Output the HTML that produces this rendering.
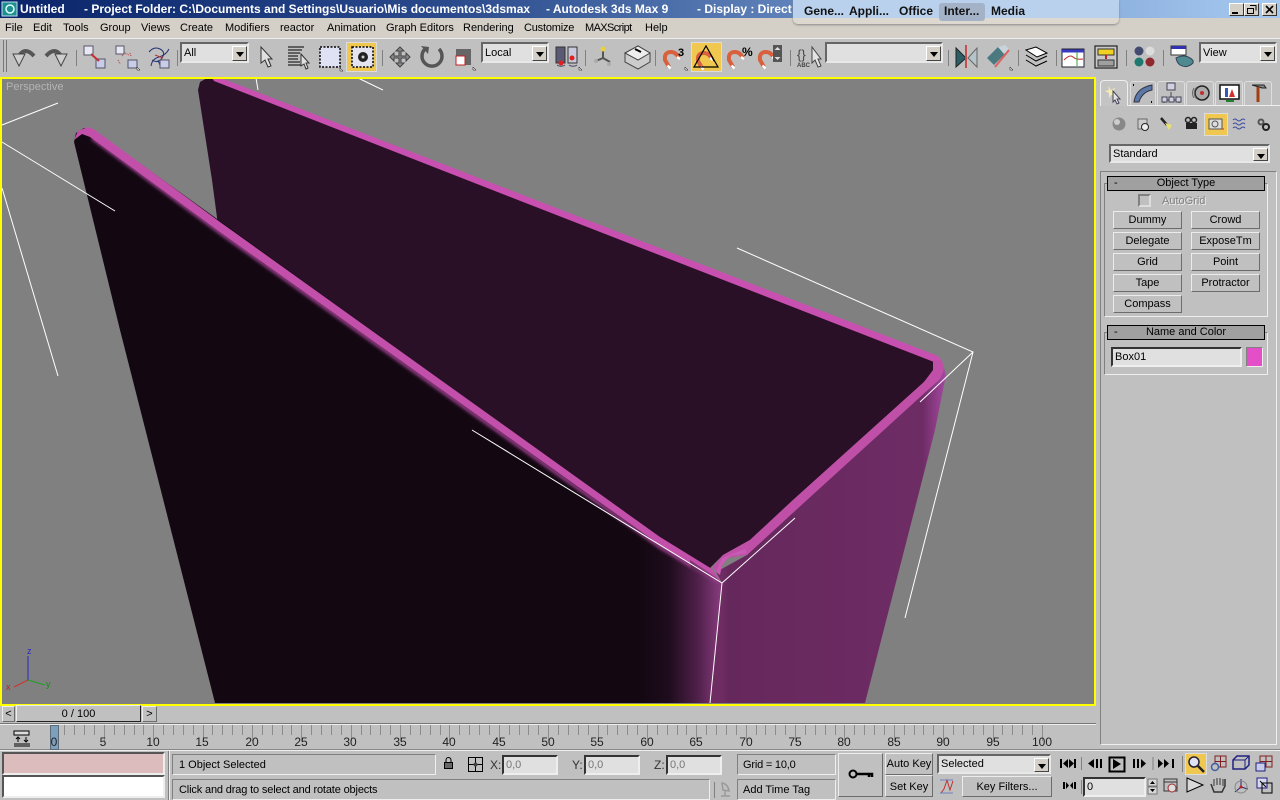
<!DOCTYPE html>
<html><head><meta charset="utf-8"><title>Untitled - Autodesk 3ds Max 9</title>
<style>
html,body{margin:0;padding:0;background:#c0c0c0;width:1280px;height:800px;overflow:hidden}
*{box-sizing:border-box}
body{font:11px "Liberation Sans",sans-serif;color:#000;position:relative}
.a{position:absolute;white-space:pre}
.t{position:absolute;white-space:pre;line-height:14px}
.b{position:absolute;background:#c0c0c0;border:1px solid;border-color:#ececec #6c6c6c #6c6c6c #ececec;text-align:center;white-space:pre}
.d{position:absolute;background:#e0e0e0;border:2px solid;border-color:#666 #e8e8e8 #e8e8e8 #666;padding-left:2px;white-space:pre}
.d i{position:absolute;right:0;top:2px;bottom:0;width:15px;background:#d4d0c8;border:1px solid;border-color:#fff #444 #444 #fff}
.d i:after{content:"";position:absolute;left:3px;top:5px;border:4px solid transparent;border-top:5px solid #000;border-bottom:0}
.s{position:absolute;background:#c0c0c0;border:1px solid;border-color:#808080 #eee #eee #808080;padding-left:6px;white-space:pre}
.h{position:absolute;background:#a0a0a0;border:1px solid #000;text-align:center;white-space:pre}
.g{position:absolute;border:1px solid;border-color:#808080 #eee #eee #808080}
.tk{position:absolute;top:735px;width:24px;text-align:center;font-size:12px;color:#222;line-height:14px}
.sep{position:absolute;width:2px;border-left:1px solid #808080;border-right:1px solid #eee}
.ti{font-weight:bold;font-size:12px;color:#fff;top:2px}
.tb{font-weight:bold;font-size:12px;color:#111;top:4px}
.m{top:21px}
.tab{position:absolute;top:81px;height:24px;border:1px solid #dedede;border-bottom:0;border-radius:3px 3px 0 0}
</style></head><body>
<!-- title bar -->
<div class="a" style="left:0;top:0;width:1280px;height:18px;background:linear-gradient(90deg,#0a246a 0,#2a4a8c 35%,#6f93c8 70%,#a6caf0 100%)"></div>
<div class="t ti" style="left:20px">Untitled</div>
<div class="t ti" style="left:84px">- Project Folder: C:\Documents and Settings\Usuario\Mis documentos\3dsmax</div>
<div class="t ti" style="left:546px">- Autodesk 3ds Max 9</div>
<div class="t ti" style="left:697px">- Display : Direct 3D</div>
<!-- menu -->
<div class="a" style="left:0;top:18px;width:1280px;height:20px;background:#d4d0c8"></div>
<div class="t m" style="left:5px">File</div>
<div class="t m" style="left:33px">Edit</div>
<div class="t m" style="left:63px">Tools</div>
<div class="t m" style="left:100px">Group</div>
<div class="t m" style="left:141px">Views</div>
<div class="t m" style="left:180px">Create</div>
<div class="t m" style="left:225px">Modifiers</div>
<div class="t m" style="left:280px">reactor</div>
<div class="t m" style="left:327px">Animation</div>
<div class="t m" style="left:386px">Graph Editors</div>
<div class="t m" style="left:463px">Rendering</div>
<div class="t m" style="left:524px;letter-spacing:-.2px">Customize</div>
<div class="t m" style="left:585px;letter-spacing:-.6px">MAXScript</div>
<div class="t m" style="left:645px">Help</div>
<!-- taskbar overlay -->
<div class="a" style="left:793px;top:0;width:326px;height:24px;background:linear-gradient(#b9d1ec 0,#b9d1ec 18px,#ddd9d0 18px,#dcd8d0 100%);border-radius:0 0 5px 5px;box-shadow:0 1px 2px #888"></div>
<div class="a" style="left:939px;top:3px;width:46px;height:18px;background:#a3b2c6;border-radius:3px"></div>
<div class="t tb" style="left:804px">Gene...</div>
<div class="t tb" style="left:849px">Appli...</div>
<div class="t tb" style="left:899px">Office</div>
<div class="t tb" style="left:944px">Inter...</div>
<div class="t tb" style="left:991px">Media</div>
<!-- window buttons -->
<div class="b" style="left:1229px;top:3px;width:15px;height:13px;background:#d4d0c8;border-color:#fff #333 #333 #fff"></div>
<div class="b" style="left:1244px;top:3px;width:15px;height:13px;background:#d4d0c8;border-color:#fff #333 #333 #fff"></div>
<div class="b" style="left:1262px;top:3px;width:15px;height:13px;background:#d4d0c8;border-color:#fff #333 #333 #fff"></div>
<!-- toolbar -->
<div class="a" style="left:0;top:38px;width:1280px;height:39px;background:#c0c0c0;border-top:1px solid #eee"></div>
<div class="a" style="left:346px;top:42px;width:31px;height:30px;background:#f0c850;border:1px solid #ddd"></div>
<div class="a" style="left:691px;top:42px;width:31px;height:30px;background:#f0c850;border:1px solid #ddd"></div>
<div class="d" style="left:180px;top:42px;width:69px;height:21px;line-height:19px">All<i></i></div>
<div class="d" style="left:481px;top:42px;width:68px;height:21px;line-height:19px">Local<i></i></div>
<div class="d" style="left:825px;top:42px;width:118px;height:21px"><i></i></div>
<div class="d" style="left:1199px;top:42px;width:78px;height:21px;line-height:19px">View<i></i></div>
<!-- viewport -->
<svg class="a" style="left:0;top:77px" width="1096" height="629" viewBox="0 77 1096 629">
<defs>
<linearGradient id="fw" gradientUnits="userSpaceOnUse" x1="640" y1="0" x2="722" y2="0"><stop offset="0" stop-color="#130812"/><stop offset=".35" stop-color="#1e0c1c"/><stop offset=".7" stop-color="#4f2049"/><stop offset="1" stop-color="#8a3c80"/></linearGradient>
<linearGradient id="rw" gradientUnits="userSpaceOnUse" x1="722" y1="0" x2="945" y2="0"><stop offset="0" stop-color="#6e2c63"/><stop offset=".03" stop-color="#65285c"/><stop offset=".9" stop-color="#6e2c65"/><stop offset="1" stop-color="#a348a0"/></linearGradient>
<filter id="bl" x="-5%" y="-5%" width="110%" height="110%"><feGaussianBlur stdDeviation="1.6"/></filter>
</defs>
<rect x="0" y="77" width="1096" height="629" fill="#808080"/>
<!-- back wall -->
<polygon points="198,90 200,82 207,78 220,78 936,356 934,370 924,382 793,500 750,540 723,555 710,568 716,585 220,240 212,180" fill="#2a1026"/>
<polygon points="212,78 221,78 938,356 941,360 934,362 500,193 214,81" fill="#c850b0"/>
<!-- right wall -->
<polygon points="942,362 946,375 935,430 865,703 710,703 722,583 716,572 747,555 800,505 925,385" fill="url(#rw)"/>
<!-- right rim -->
<polygon points="933,360 942,360 944,370 940,379 807,500 747,555 727,558 718,572 712,568 723,555 750,540 793,500 924,382 933,370" fill="#c04fa8"/>
<polygon points="747,553 730,556 722,565 720,575 716,572 722,558 745,549" fill="#c85cb4"/>
<!-- front wall -->
<polygon points="74,142 76,133 84,128 92,129 716,578 722,584 710,703 215,703 120,330" fill="url(#fw)"/>
<polyline points="92,138 222,234 660,547 718,582" stroke="#b048a0" stroke-width="3" fill="none" filter="url(#bl)"/>
<polygon points="74,140 78,131 88,127 95,130 220,222 660,537 712,569 720,580 715,578 660,545 220,232 90,137 82,134" fill="#c24fa9"/>
<polygon points="688,703 710,703 722,583 716,577 690,560 697,640" fill="url(#fw)" opacity=".55"/>
<!-- helper lines -->
<g stroke="#fff" stroke-width="1" fill="none">
<path d="M472 430L722 583L795 518M722 583L710 703"/>
<path d="M920 402L973 352L737 248M973 352L905 618"/>
<path d="M2 125L58 103M2 142L115 211M2 188L58 376M256 78L258 90M358 78L383 90"/>
</g>
<!-- axis tripod -->
<g fill="none" stroke-width="1">
<path d="M28 680V656" stroke="#2828c8"/><path d="M28 680L14 687" stroke="#d03030"/><path d="M28 680L45 685" stroke="#20a020"/>
</g>
<text x="27" y="654" font-family="Liberation Sans" font-size="9" fill="#2828c8">z</text>
<text x="6" y="690" font-family="Liberation Sans" font-size="9" fill="#c02020">x</text>
<text x="46" y="687" font-family="Liberation Sans" font-size="9" fill="#109010">y</text>
<rect x="1" y="78" width="1094" height="627" fill="none" stroke="#ff0" stroke-width="2"/>
</svg>
<div class="t" style="left:6px;top:80px;color:#b4b4b4;font-size:11px">Perspective</div>
<!-- right panel -->
<div class="a" style="left:1100px;top:105px;width:180px;height:1px;background:#eee"></div>
<div class="a" style="left:1100px;top:80px;width:28px;height:26px;background:#c4c4c4;border:1px solid #eee;border-bottom:0;border-radius:4px 4px 0 0"></div>
<div class="tab" style="left:1130px;width:26px"></div>
<div class="tab" style="left:1157px;width:28px"></div>
<div class="tab" style="left:1186px;width:28px"></div>
<div class="tab" style="left:1215px;width:28px"></div>
<div class="tab" style="left:1244px;width:28px"></div>
<div class="a" style="left:1204px;top:113px;width:24px;height:23px;background:#f0c850;border:1px solid #ddd"></div>
<div class="d" style="left:1109px;top:144px;width:161px;height:19px;line-height:17px">Standard<i></i></div>
<div class="g" style="left:1100px;top:171px;width:177px;height:574px"></div>
<div class="g" style="left:1104px;top:183px;width:164px;height:134px"></div>
<div class="h" style="left:1107px;top:176px;width:158px;height:15px;line-height:13px"><span style="position:absolute;left:6px">-</span>Object Type</div>
<div class="a" style="left:1138px;top:194px;width:13px;height:13px;border:2px solid;border-color:#808080 #ddd #ddd #808080"></div>
<div class="t" style="left:1162px;top:194px;color:#808080;text-shadow:1px 1px 0 #eee">AutoGrid</div>
<div class="b" style="left:1113px;top:211px;width:69px;height:18px;line-height:16px">Dummy</div>
<div class="b" style="left:1191px;top:211px;width:69px;height:18px;line-height:16px">Crowd</div>
<div class="b" style="left:1113px;top:232px;width:69px;height:18px;line-height:16px">Delegate</div>
<div class="b" style="left:1191px;top:232px;width:69px;height:18px;line-height:16px">ExposeTm</div>
<div class="b" style="left:1113px;top:253px;width:69px;height:18px;line-height:16px">Grid</div>
<div class="b" style="left:1191px;top:253px;width:69px;height:18px;line-height:16px">Point</div>
<div class="b" style="left:1113px;top:274px;width:69px;height:18px;line-height:16px">Tape</div>
<div class="b" style="left:1191px;top:274px;width:69px;height:18px;line-height:16px">Protractor</div>
<div class="b" style="left:1113px;top:295px;width:69px;height:18px;line-height:16px">Compass</div>
<div class="g" style="left:1104px;top:332px;width:164px;height:43px"></div>
<div class="h" style="left:1107px;top:325px;width:158px;height:15px;line-height:13px"><span style="position:absolute;left:6px">-</span>Name and Color</div>
<div class="d" style="left:1111px;top:347px;width:131px;height:20px;line-height:17px;border-color:#333 #eee #eee #333">Box01</div>
<div class="a" style="left:1246px;top:347px;width:17px;height:20px;background:#e44fc8;border:1px solid;border-color:#808080 #eee #eee #808080"></div>
<!-- bottom -->
<div class="b" style="left:2px;top:706px;width:13px;height:16px;line-height:14px">&lt;</div>
<div class="b" style="left:16px;top:705px;width:125px;height:17px;line-height:17px;border-color:#eee #222 #222 #eee">0 / 100</div>
<div class="b" style="left:142px;top:706px;width:15px;height:16px;line-height:14px">&gt;</div>
<div class="a" style="left:0;top:723px;width:1096px;height:2px;border-top:1px solid #777;border-bottom:1px solid #eee"></div>
<div class="a" style="left:0;top:749px;width:1280px;height:2px;border-top:1px solid #888;border-bottom:1px solid #eee"></div>
<div class="g" style="left:1100px;top:700px;width:177px;height:45px;border-top:0"></div>
<div class="a" style="left:50px;top:725px;width:9px;height:25px;background:#7e9fbc;border:1px solid #5a6a78"></div>
<svg class="a" style="left:0;top:724px" width="1100" height="26" viewBox="0 724 1100 26">
<path shape-rendering="crispEdges" stroke="#8c8c8c" fill="none" d="M64.5 725v10M74.5 725v10M84.5 725v10M94.5 725v10M104.5 725v16M114.5 725v10M124.5 725v10M134.5 725v10M143.5 725v10M153.5 725v16M163.5 725v10M173.5 725v10M183.5 725v10M193.5 725v10M203.5 725v16M212.5 725v10M222.5 725v10M232.5 725v10M242.5 725v10M252.5 725v16M262.5 725v10M272.5 725v10M282.5 725v10M291.5 725v10M301.5 725v16M311.5 725v10M321.5 725v10M331.5 725v10M341.5 725v10M351.5 725v16M361.5 725v10M370.5 725v10M380.5 725v10M390.5 725v10M400.5 725v16M410.5 725v10M420.5 725v10M430.5 725v10M440.5 725v10M449.5 725v16M459.5 725v10M469.5 725v10M479.5 725v10M489.5 725v10M499.5 725v16M509.5 725v10M519.5 725v10M528.5 725v10M538.5 725v10M548.5 725v16M558.5 725v10M568.5 725v10M578.5 725v10M588.5 725v10M598.5 725v16M607.5 725v10M617.5 725v10M627.5 725v10M637.5 725v10M647.5 725v16M657.5 725v10M667.5 725v10M677.5 725v10M686.5 725v10M696.5 725v16M706.5 725v10M716.5 725v10M726.5 725v10M736.5 725v10M746.5 725v16M756.5 725v10M765.5 725v10M775.5 725v10M785.5 725v10M795.5 725v16M805.5 725v10M815.5 725v10M825.5 725v10M835.5 725v10M844.5 725v16M854.5 725v10M864.5 725v10M874.5 725v10M884.5 725v10M894.5 725v16M904.5 725v10M914.5 725v10M923.5 725v10M933.5 725v10M943.5 725v16M953.5 725v10M963.5 725v10M973.5 725v10M983.5 725v10M993.5 725v16M1002.5 725v10M1012.5 725v10M1022.5 725v10M1032.5 725v10M1042.5 725v16"/>
</svg>
<div class="tk" style="left:42px">0</div><div class="tk" style="left:91px">5</div><div class="tk" style="left:141px">10</div><div class="tk" style="left:190px">15</div><div class="tk" style="left:240px">20</div><div class="tk" style="left:289px">25</div><div class="tk" style="left:338px">30</div><div class="tk" style="left:388px">35</div><div class="tk" style="left:437px">40</div><div class="tk" style="left:487px">45</div><div class="tk" style="left:536px">50</div><div class="tk" style="left:585px">55</div><div class="tk" style="left:635px">60</div><div class="tk" style="left:684px">65</div><div class="tk" style="left:734px">70</div><div class="tk" style="left:783px">75</div><div class="tk" style="left:832px">80</div><div class="tk" style="left:882px">85</div><div class="tk" style="left:931px">90</div><div class="tk" style="left:981px">95</div><div class="tk" style="left:1030px">100</div>
<div class="a" style="left:2px;top:752px;width:163px;height:23px;background:#dcbcbc;border:2px solid;border-color:#555 #eee #eee #555"></div>
<div class="a" style="left:2px;top:775px;width:163px;height:23px;background:#fff;border:2px solid;border-color:#555 #eee #eee #555"></div>
<div class="sep" style="left:168px;top:751px;height:49px"></div>
<div class="s" style="left:172px;top:754px;width:264px;height:21px;line-height:21px">1 Object Selected</div>
<div class="s" style="left:172px;top:779px;width:538px;height:21px;line-height:21px;letter-spacing:-.15px">Click and drag to select and rotate objects</div>
<div class="t" style="left:490px;top:758px;color:#333;font-size:12px">X:</div>
<div class="d" style="left:502px;top:755px;width:56px;height:20px;line-height:17px;color:#777;border-color:#333 #eee #eee #333">0,0</div>
<div class="t" style="left:572px;top:758px;color:#333;font-size:12px">Y:</div>
<div class="d" style="left:584px;top:755px;width:56px;height:20px;line-height:17px;color:#777;border-color:#333 #eee #eee #333">0,0</div>
<div class="t" style="left:654px;top:758px;color:#333;font-size:12px">Z:</div>
<div class="d" style="left:666px;top:755px;width:56px;height:20px;line-height:17px;color:#777;border-color:#333 #eee #eee #333">0,0</div>
<div class="s" style="left:737px;top:754px;width:99px;height:21px;line-height:21px;padding-left:5px;letter-spacing:-.2px">Grid = 10,0</div>
<div class="s" style="left:737px;top:779px;width:99px;height:21px;line-height:21px;padding-left:5px">Add Time Tag</div>
<div class="b" style="left:838px;top:753px;width:45px;height:44px"></div>
<div class="b" style="left:885px;top:753px;width:48px;height:22px;line-height:21px">Auto Key</div>
<div class="b" style="left:885px;top:775px;width:48px;height:22px;line-height:22px">Set Key</div>
<div class="d" style="left:937px;top:754px;width:114px;height:20px;line-height:17px">Selected<i></i></div>
<div class="b" style="left:962px;top:776px;width:90px;height:21px;line-height:20px">Key Filters...</div>
<div class="a" style="left:1185px;top:753px;width:22px;height:22px;background:#f0c850;border:1px solid #ddd"></div>
<div class="d" style="left:1083px;top:777px;width:63px;height:20px;line-height:17px;border-color:#333 #eee #eee #333">0</div>
<!-- icons overlay -->
<svg class="a" style="left:0;top:0;pointer-events:none" width="1280" height="800" viewBox="0 0 1280 800" fill="none">
<defs>
<g id="mag"><path d="M6 16L2 9Q1 1 8 1Q13 1 16 7" stroke="#d8603c" stroke-width="4"/><path d="M4.500 14.500l3 3M14 6l3 2" stroke="#fff" stroke-width="2.500"/></g>
</defs>
<!-- max logo -->
<rect x="2" y="2" width="15" height="14" fill="#1f8f8f" stroke="#bde"/><circle cx="10" cy="9" r="4" stroke="#dff" stroke-width="1.5"/>
<!-- window btn glyphs -->
<path d="M1232 13h6" stroke="#000" stroke-width="2"/>
<path d="M1250 5.5h6v5M1247.5 8.5h6v5h-6z" stroke="#000"/>
<path d="M1266 6l7 7M1273 6l-7 7" stroke="#000" stroke-width="1.6"/>
<!-- grips & separators -->
<path d="M3.5 40v32M6.5 40v32" stroke="#777"/>
<path d="M76.5 50v16M177.5 50v16M382.5 50v16M585.5 50v16M655.5 50v16M790.5 50v16M948.5 50v16M1018.5 50v16M1056.5 50v16M1126.5 50v16M1163.5 50v16" stroke="#808080"/>
<!-- undo redo -->
<path d="M19 56Q25 46 34 56" stroke="#555" stroke-width="4"/><path d="M13 54h12l-6 12z" fill="#cfcfcf" stroke="#444"/>
<path d="M61 56Q55 46 46 56" stroke="#555" stroke-width="4"/><path d="M67 54h-12l6 12z" fill="#cfcfcf" stroke="#444"/>
<!-- link -->
<rect x="84" y="46" width="9" height="9" fill="#e8e8f4" stroke="#556"/><rect x="96" y="59" width="9" height="9" fill="#c8cce8" stroke="#556"/><path d="M91 54l8 7" stroke="#c03030" stroke-width="2"/>
<rect x="116" y="46" width="8" height="8" fill="#e8e8f4" stroke="#556"/><rect x="128" y="60" width="9" height="8" fill="#c8cce8" stroke="#556"/><path d="M122 56l3-3 4 2M118 60l2 4M130 53l1 3" stroke="#c03030" stroke-dasharray="1 1"/>
<path d="M149 52q5-6 11-3t2 9-10 2M151 66q1-7 8-9t10-8M158 60l3 8" stroke="#223070"/><path d="M155 55l8 3" stroke="#c03030"/><rect x="160" y="60" width="9" height="8" fill="#c8cce8" stroke="#556"/>
<!-- select -->
<path d="M261 47v16l4-3 3 7 3-1-3-7h4z" fill="#e0e0e0" stroke="#333"/>
<path d="M288 47h16M288 50h14M288 53h12M288 56h10M288 59h10M288 62h12M288 65h14" stroke="#000"/><path d="M301 54v12l3-2 2 5 2-1-2-5h3z" fill="#e0e0e0" stroke="#333"/>
<rect x="320" y="47" width="20" height="20" fill="#dfe2f4" stroke="#000" stroke-dasharray="2 1.5" stroke-width="1.5"/>
<rect x="352" y="47" width="21" height="20" fill="#e4e4f0" stroke="#000" stroke-dasharray="2 1.5" stroke-width="1.5"/><circle cx="363" cy="57" r="5" fill="#222"/><circle cx="363" cy="57" r="1.5" fill="#ccc"/>
<!-- move -->
<path d="M400 47l4 4h-3v5h5v-3l4 4-4 4v-3h-5v5h3l-4 4-4-4h3v-5h-5v3l-4-4 4-4v3h5v-5h-3z" fill="#8a8a90" stroke="#444"/>
<!-- rotate -->
<path d="M425 49a10 10 0 1 0 14 0" stroke="#555" stroke-width="3.5"/><path d="M421 46l8 1-1 7z" fill="#555"/>
<!-- scale -->
<rect x="456" y="49" width="15" height="16" fill="#666"/><rect x="456" y="56" width="9" height="9" fill="#fff" stroke="#c02020"/>
<!-- pivot -->
<rect x="556" y="47" width="9" height="16" fill="#5a5a74" stroke="#333"/><rect x="568" y="47" width="9" height="16" fill="#c8c8dc" stroke="#333"/><circle cx="561" cy="63" r="2.5" fill="#e02020"/><circle cx="572" cy="58" r="2.5" fill="#e02020"/>
<path d="M557 65a5 3 0 0 0 8 0M569 65a5 3 0 0 0 8 0" stroke="#446"/>
<!-- manipulate -->
<path d="M603 50v8M603 58l-7 3M603 58l7 4" stroke="#555" stroke-width="2"/><circle cx="603" cy="49" r="2.5" fill="#e8d040"/><circle cx="596" cy="61" r="2" fill="#aaa"/><circle cx="609" cy="64" r="2" fill="#aaa"/>
<!-- keyboard -->
<path d="M625 53l13-7 12 7v9l-12 7-13-7z" fill="#ccc" stroke="#444"/><path d="M625 53l13 7 12-7-12-7z" fill="#eee" stroke="#444"/><path d="M635 49l6 3" stroke="#000" stroke-width="2"/>
<!-- snaps -->
<use href="#mag" x="663" y="51"/><use href="#mag" x="696" y="52"/><use href="#mag" x="727" y="51"/><use href="#mag" x="758" y="51"/>
<text x="678" y="56" font-family="Liberation Sans" font-size="11" font-weight="bold" fill="#000">3</text>
<path d="M694 67h24l-12-21zM710 53l4 8" stroke="#000" stroke-width="1.2"/>
<text x="742" y="56" font-family="Liberation Sans" font-size="12" font-weight="bold" fill="#000">%</text>
<rect x="773" y="45" width="9" height="17" fill="#555"/><path d="M777.5 47l3 3h-6zM777.5 60l3-3h-6z" fill="#ddd"/>
<!-- named -->
<text x="797" y="59" font-family="Liberation Sans" font-size="13" fill="#444">{}</text>
<text x="797" y="67" font-family="Liberation Sans" font-size="6" font-weight="bold" fill="#444">ABC</text>
<path d="M812 47v16l3-3 3 7 3-1-3-7h3z" fill="#e4e4e4" stroke="#444"/>
<!-- mirror -->
<path d="M956 48v19l10-9z" fill="#2c5e66" stroke="#222"/><path d="M977 48v19l-9-9z" fill="#b4c4c8" stroke="#666"/><path d="M966 45v23" stroke="#c05050" stroke-width="2"/>
<!-- align -->
<path d="M987 58l11-11 7 7-11 11z" fill="#4a7a80"/><path d="M998 47l7-2 4 4-5 5z" fill="#c8d4dc"/><path d="M995 67l14-17" stroke="#e06060" stroke-width="2"/>
<!-- layers -->
<path d="M1026 50l10-3 11 6-10 4z" fill="#fff" stroke="#000"/><path d="M1026 55l10 6 11-5M1026 60l10 6 11-5" stroke="#000"/>
<!-- curve editor -->
<rect x="1062" y="49" width="22" height="18" fill="#fff" stroke="#223"/><path d="M1062 51h22" stroke="#3838c0" stroke-width="3"/><path d="M1064 60q6-6 9-3t10 2" stroke="#c03030"/><path d="M1077 52v14" stroke="#30a030"/>
<!-- schematic -->
<rect x="1095" y="46" width="22" height="22" fill="#c8c8c8" stroke="#222" stroke-width="1.2"/><rect x="1098" y="49" width="16" height="6" fill="#f0d020" stroke="#333"/><rect x="1098" y="60" width="16" height="6" fill="#a0a0a0" stroke="#333"/><path d="M1106 55v4" stroke="#c02020" stroke-width="2"/>
<!-- material -->
<circle cx="1139" cy="51" r="4.5" fill="#424a70"/><circle cx="1150" cy="51" r="4.5" fill="#dcdcdc"/><circle cx="1139" cy="62" r="4.5" fill="#1e7a70"/><circle cx="1150" cy="62" r="4.5" fill="#902830"/>
<!-- render -->
<rect x="1171" y="46" width="15" height="9" fill="#fff" stroke="#333"/><path d="M1171 47.5h15" stroke="#3030b0" stroke-width="3"/><path d="M1176 58q8-4 14 0 4 2 3 5-6 6-13 2-3-2-4-7z" fill="#4f8a90" stroke="#345"/>
<path d="M137 67l3 3h-3zM473 67l3 3h-3zM579 67l3 3h-3zM685 67l3 3h-3zM340 68l3 3h-3zM1010 67l3 3h-3z" fill="#fff" stroke="#000" stroke-width=".5"/>
<!-- command tabs icons -->
<path d="M1108 86l3 4 4-2-2 4 3 3-5 0-2 3v-5l-4-2 4-1z" fill="#f4ecb0"/><path d="M1113 91v11l2-2 2 4 2-1-2-4 3 0z" fill="#e4e4e4" stroke="#445"/>
<path d="M1134 102q2-14 18-17v5q-10 2-13 12z" fill="#5a78a8" stroke="#334"/><path d="M1133 85h1M1151 102h1" stroke="#000" stroke-width="2"/>
<path d="M1171 92v5M1164 103v-3h15v3" stroke="#445"/><rect x="1167" y="83" width="8" height="7" fill="#d0d0e0" stroke="#445"/><rect x="1162" y="97" width="5" height="5" fill="#d0d0e0" stroke="#445"/><rect x="1169" y="97" width="5" height="5" fill="#d0d0e0" stroke="#445"/><rect x="1176" y="97" width="5" height="5" fill="#d0d0e0" stroke="#445"/>
<circle cx="1202" cy="93" r="7" fill="#aaa" stroke="#222" stroke-width="1.5"/><circle cx="1202" cy="93" r="2" fill="#c03030"/><path d="M1197 87a8 8 0 0 0 0 12M1194 88a9 9 0 0 0 0 10" stroke="#666"/>
<rect x="1220" y="85" width="19" height="14" fill="#fff" stroke="#111" stroke-width="1.5"/><path d="M1225 97v-9h3v9z" fill="#3858b8"/><path d="M1229 97l3-8 3 8z" fill="#d03030"/><path d="M1226 101h8" stroke="#208030" stroke-width="2"/>
<path d="M1252 85h12l2 3-4 0-3-1z" fill="#888" stroke="#222"/><path d="M1258 87v15" stroke="#a04010" stroke-width="3"/>
<!-- subcategory icons -->
<circle cx="1119" cy="124" r="6.5" fill="#888"/><circle cx="1117" cy="122" r="3" fill="#ccc"/>
<rect x="1138" y="119" width="9" height="10" fill="#ccc" stroke="#666"/><circle cx="1145" cy="127" r="3.5" fill="#eee" stroke="#222"/>
<path d="M1161 118l6 7" stroke="#222" stroke-width="2.5"/><path d="M1165 123l4 7 3-5z" fill="#e8e070"/>
<rect x="1186" y="123" width="11" height="6" fill="#222"/><circle cx="1188" cy="120" r="2.5" stroke="#222" stroke-width="1.5"/><circle cx="1194" cy="120" r="2.5" stroke="#222" stroke-width="1.5"/>
<rect x="1209" y="119" width="13" height="10" fill="#ddd" stroke="#555"/><circle cx="1215" cy="124" r="3" stroke="#555"/><path d="M1222 129h2" stroke="#c03030"/>
<path d="M1233 120q2-2 4 0t4 0 4 0M1233 124q2-2 4 0t4 0 4 0M1233 128q2-2 4 0t4 0 4 0" stroke="#3a4aa0"/>
<circle cx="1261" cy="122" r="2.5" stroke="#555" stroke-width="2"/><circle cx="1266" cy="127" r="3" stroke="#222" stroke-width="2"/>
<!-- timeline config -->
<rect x="14" y="731" width="15" height="4" fill="#ddd" stroke="#000"/><path d="M14 746h16M14 744h16" stroke="#000"/><path d="M18 737v5M16 739l2-2 2 2M26 742v-5M24 740l2 2 2-2" stroke="#000"/>
<!-- lock & abs -->
<rect x="444.500" y="762.500" width="8" height="6" fill="#666" stroke="#000"/><path d="M446 762v-2a2.500 2.500 0 0 1 5 0v2" stroke="#000"/>
<rect x="468.500" y="757.500" width="14" height="14" stroke="#000"/><path d="M475.500 757v15M468 764.500h15" stroke="#000"/><circle cx="475.500" cy="764.500" r="2" fill="#444"/>
<!-- crosshair radar -->
<path d="M714.500 782v16" stroke="#808080"/><path d="M722 783q6 1 7 8l-6-1zM721 796h9M725 791v5" stroke="#999" stroke-width="1.5"/>
<!-- key -->
<circle cx="853" cy="774" r="3.500" stroke="#000" stroke-width="2"/><path d="M856 774h16v3M869 774v3" stroke="#000" stroke-width="2.500"/>
<!-- curve small -->
<path d="M941 793l3-4 3-9 3 10 3-9" stroke="#c03030"/><path d="M940 780h13M940 793h13" stroke="#7080c0"/>
<!-- transport -->
<g fill="#000">
<path d="M1060 759h2v9h-2zM1068 759v9l-5-4.500zM1069 759v9l5-4.500zM1074 759h2v9h-2z"/>
<path d="M1094 759v9l-6-4.500zM1096 759h2v9h-2zM1100 759h2v9h-2z"/>
<path d="M1113 759v10l8-5z"/>
<path d="M1133 759h2v9h-2zM1137 759h2v9h-2zM1141 759v9l5-4.500z"/>
<path d="M1158 759v9l5-4.500zM1164 759v9l5-4.500zM1172 759h2v9h-2z"/>
<path d="M1063 782h2v7h-2zM1066 782v7l3-3.500zM1073 782v7l-3-3.500zM1074 782h2v7h-2z"/>
</g>
<rect x="1109.500" y="757.500" width="15" height="14" stroke="#000" stroke-width="2"/>
<path d="M1081.500 757v13M1153 757v13M1182.500 756v16M1081.500 780v14" stroke="#808080"/>
<!-- spinner -->
<path d="M1148 779h9v7h-9zM1148 787h9v7h-9z" fill="#d8d8d8" stroke="#777"/><path d="M1152.500 781l2.500 3h-5zM1152.500 792l2.500-3h-5z" fill="#000"/>
<!-- time config -->
<rect x="1164" y="779" width="13" height="12" stroke="#333"/><circle cx="1172" cy="788" r="4" fill="#ddd" stroke="#a03030"/><path d="M1164 782h13" stroke="#333"/>
<!-- nav -->
<circle cx="1194" cy="762" r="5" fill="#dfe2f4" stroke="#223" stroke-width="1.5"/><path d="M1198 766l6 6" stroke="#222" stroke-width="2.5"/>
<path d="M1215 756h11v11h-11zM1220.500 756v11M1215 761.500h11" stroke="#802020"/><circle cx="1215" cy="767" r="3.500" fill="#c0c0c0" stroke="#4060a0" stroke-width="1.500"/>
<path d="M1233 760l4-4h12v9l-4 4h-12z" stroke="#202080" stroke-width="1.500"/><path d="M1233 760h12v9M1245 760l4-4" stroke="#202080"/>
<path d="M1260 756h12v11h-12zM1266 756v11M1260 761.500h12" stroke="#802020"/><path d="M1256 763h9v8h-9z" fill="#c8cce8" stroke="#202080"/>
<path d="M1187 778l16 7-16 7z" fill="#d8d8d8" stroke="#000"/>
<path d="M1211 784l3 8h8l3-6v-7" stroke="#333" stroke-width="1.500"/><path d="M1214 779v7M1217 778v7M1220 778v7M1223 779v7" stroke="#333"/>
<path d="M1241 779v8M1241 787l-6 5M1241 787l7 2" stroke="#202080"/><circle cx="1241" cy="787" r="6" stroke="#888"/><circle cx="1241" cy="787" r="1.500" fill="#c02020"/>
<rect x="1257" y="778" width="10" height="10" fill="#d8d8ec" stroke="#202080"/><rect x="1262" y="783" width="10" height="10" stroke="#000"/><path d="M1260 781l6 6" stroke="#000"/>
</svg>
</body></html>
